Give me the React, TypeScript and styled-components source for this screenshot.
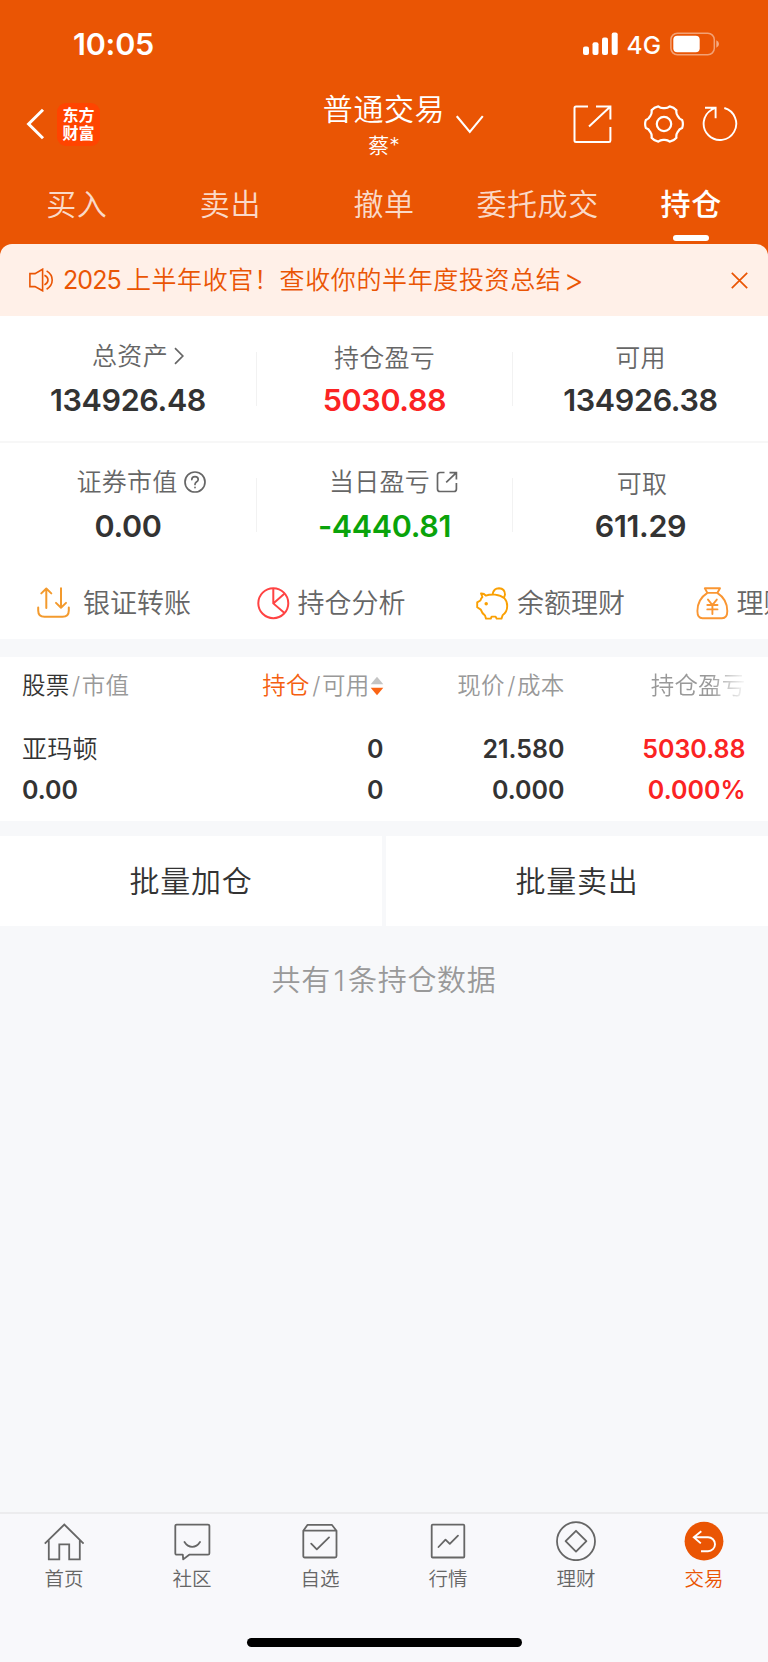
import React from 'react';
import styled, { createGlobalStyle } from 'styled-components';

const ORANGE = '#ea5504';
const INK = '#333333';
const GREY = '#666666';
const MUTED = '#999999';
const PAGE = '#f7f8fa';
const RED = '#fb2323';
const GREEN = '#0aa30a';

const GlobalStyle = createGlobalStyle`
  *, *::before, *::after { box-sizing: border-box; }
  body {
    margin: 0;
    background: ${PAGE};
    color: ${INK};
    font-family: Inter, 'Noto Sans CJK SC', sans-serif;
    font-weight: 350;
    -webkit-font-smoothing: antialiased;
  }
  svg { display: block; flex: none; }
`;

const Screen = styled.div`
  width: 768px;
  height: 1662px;
  display: flex;
  flex-direction: column;
  background: ${PAGE};
  overflow: hidden;
  white-space: nowrap;
`;

/* ---------- header ---------- */

const Header = styled.header`
  background: ${ORANGE};
  color: #fff;
  height: 256px;
  flex: none;
`;

const StatusBar = styled.div`
  height: 88px;
  padding: 0 49px 0 73px;
  display: flex;
  align-items: center;
  justify-content: space-between;
`;

const Clock = styled.span`
  font-size: 30.5px;
  line-height: 40px;
  font-weight: 600;
  letter-spacing: -0.2px;
`;

const StatusIcons = styled.div`
  display: flex;
  align-items: center;
`;

const Network = styled.span`
  margin: 1px 9px 0 8px;
  font-size: 24.5px;
  line-height: 30px;
  font-weight: 450;
  letter-spacing: 0;
`;

const NavBar = styled.div`
  height: 80px;
  display: grid;
  grid-template-columns: 1fr auto 1fr;
`;

const NavLeft = styled.div`
  display: flex;
  align-items: center;
  padding: 0 0 8px 26px;
  gap: 12px;
`;

const Logo = styled.div`
  width: 43px;
  height: 43px;
  border-radius: 9px;
  background: #ff4400;
  font-size: 16px;
  line-height: 18px;
  font-weight: 700;
  text-align: center;
  padding-top: 3px;
`;

const NavTitle = styled.div`
  display: flex;
  flex-direction: column;
  align-items: center;
`;

const TitleText = styled.span`
  font-size: 30px;
  line-height: 42px;
  letter-spacing: 0.6px;
`;

const SubTitle = styled.span`
  font-size: 21px;
  line-height: 32px;
`;

const NavRight = styled.div`
  display: flex;
  align-items: center;
  padding: 0 30px 8px 11px;
`;

const NavTools = styled.div`
  margin-left: auto;
  display: flex;
  align-items: center;
`;

const NavTool = styled.div<{ $gap?: number }>`
  margin-left: ${p => p.$gap ?? 0}px;
`;

const Tabs = styled.nav`
  height: 74px;
  display: grid;
  grid-template-columns: repeat(5, 1fr);
`;

const Tab = styled.div<{ $active?: boolean }>`
  display: flex;
  flex-direction: column;
  align-items: center;
  font-size: 30px;
  line-height: 40px;
  padding-top: 16px;
  letter-spacing: 0.6px;
  color: ${p => (p.$active ? '#fff' : 'rgba(255,255,255,0.8)')};
  font-weight: ${p => (p.$active ? 500 : 350)};

  &::after {
    content: '';
    display: ${p => (p.$active ? 'block' : 'none')};
    width: 36px;
    height: 6px;
    margin-top: 11px;
    border-radius: 3px;
    background: #fff;
  }
`;

/* ---------- notice ---------- */

const Notice = styled.div`
  position: relative;
  margin-top: -12px;
  height: 72px;
  flex: none;
  padding: 0 20px 0 28px;
  border-radius: 12px 12px 0 0;
  background: #fff0e8;
  color: ${ORANGE};
  display: flex;
  align-items: center;
  font-size: 25px;
  line-height: 36px;
  letter-spacing: 0.62px;
`;

const NoticeText = styled.span`
  flex: 1;
  display: flex;
  margin-left: 8px;
`;

const Year = styled.span`
  margin-right: 5px;
  font-weight: 400;
  letter-spacing: -0.9px;
`;

const More = styled.span`
  margin-left: 2px;
  font-size: 31px;
`;

/* ---------- account figures ---------- */

const Figures = styled.section`
  background: #fff;
  height: 253px;
  flex: none;
  display: grid;
  grid-template-rows: 125px 125px;
`;

const FigureRow = styled.div`
  display: grid;
  grid-template-columns: repeat(3, 256px);
  align-items: center;

  & + & { border-top: 2px solid #f7f7f7; }
`;

const Figure = styled.div`
  height: 54px;
  display: flex;
  flex-direction: column;
  align-items: center;
  justify-content: center;

  & + & { border-left: 1px solid #f2f2f2; }
`;

const FigureLabel = styled.div<{ $shift?: number; $lift?: number }>`
  display: flex;
  flex: none;
  align-items: center;
  gap: 6px;
  height: 42px;
  padding-left: ${p => p.$shift ?? 0}px;
  padding-bottom: ${p => p.$lift ?? 0}px;
  font-size: 25px;
  line-height: 34px;
  letter-spacing: 0.3px;
  color: ${GREY};
`;

const FigureValue = styled.div<{ $color?: string }>`
  flex: none;
  font-size: 30.5px;
  line-height: 41px;
  font-weight: 600;
  letter-spacing: -0.35px;
  color: ${p => p.$color ?? INK};
`;

/* ---------- shortcuts ---------- */

const Shortcuts = styled.div`
  height: 70px;
  flex: none;
  background: #fff;
  padding-left: 37px;
  display: flex;
  overflow: hidden;
`;

const Shortcut = styled.div<{ $gap?: number }>`
  flex: 0 0 219.5px;
  display: flex;
  align-items: flex-start;
  gap: ${p => p.$gap ?? 8}px;
  padding-top: 18px;
  font-size: 27px;
  line-height: 34px;
  color: ${GREY};
`;

/* ---------- holdings table ---------- */

const Holdings = styled.section`
  margin-top: 18px;
  height: 164px;
  flex: none;
  padding: 0 23px 0 22px;
  background: #fff;
`;

const GridRow = styled.div`
  display: grid;
  grid-template-columns: 171px 190.5px 181px 181px;
`;

const HeadRow = styled(GridRow)`
  height: 72px;
  padding-top: 11px;
  font-size: 23.5px;
  line-height: 36px;
  letter-spacing: 0.2px;
  color: ${MUTED};
`;

const HeadCell = styled.div<{ $left?: boolean; $fade?: boolean }>`
  display: flex;
  align-items: center;
  height: 36px;
  justify-content: ${p => (p.$left ? 'flex-start' : 'flex-end')};
  ${p => p.$fade && 'mask-image: linear-gradient(to right, #000 80%, transparent 101%);'}
`;

const Slash = styled.span`
  margin: 0 1.5px 0 2.5px;
`;

const Strong = styled.span<{ $color?: string }>`
  color: ${p => p.$color ?? INK};
`;

const Cell = styled.div<{ $left?: boolean; $color?: string }>`
  text-align: ${p => (p.$left ? 'left' : 'right')};
  color: ${p => p.$color ?? INK};
  font-size: 25px;
  line-height: 40.5px;
  font-weight: 600;
`;

const StockName = styled(Cell)`
  font-weight: 350;
  letter-spacing: 0.3px;
`;

/* ---------- batch actions ---------- */

const Batch = styled.div`
  margin-top: 15px;
  height: 90px;
  flex: none;
  display: grid;
  grid-template-columns: 1fr 1fr;
  gap: 4px;
`;

const BatchButton = styled.button`
  border: 0;
  padding: 0;
  background: #fff;
  color: ${INK};
  font: inherit;
  font-size: 30px;
  line-height: 40px;
  letter-spacing: 0.8px;
`;

const Summary = styled.p`
  margin: 35px 0 0;
  text-align: center;
  font-size: 29px;
  line-height: 40px;
  letter-spacing: 0.7px;
  color: ${MUTED};
`;

const Count = styled.span`
  margin: 0 2.5px;
`;

/* ---------- bottom bar ---------- */

const BottomBar = styled.footer`
  margin-top: auto;
  height: 150px;
  flex: none;
  background: #f8f8fb;
  border-top: 2px solid #ececee;
  display: flex;
  flex-direction: column;
  align-items: center;
`;

const BottomTabs = styled.nav`
  width: 768px;
  display: grid;
  grid-template-columns: repeat(6, 128px);
`;

const BottomTab = styled.div<{ $active?: boolean }>`
  display: flex;
  flex-direction: column;
  align-items: center;
  padding-top: 7px;
  gap: 5px;
  font-size: 19.5px;
  line-height: 26px;
  color: ${p => (p.$active ? ORANGE : GREY)};
`;

const HomeIndicator = styled.div`
  width: 275px;
  height: 9px;
  margin: auto 0 15px;
  border-radius: 5px;
  background: #000;
`;

/* ---------- icons ---------- */

type IconProps = {
  w: number;
  h: number;
  color?: string;
  sw?: number;
  round?: boolean;
  children: React.ReactNode;
};

const Icon = ({ w, h, color = 'currentColor', sw = 2, round, children }: IconProps) => (
  <svg
    width={w}
    height={h}
    viewBox={`0 0 ${w} ${h}`}
    fill="none"
    stroke={color}
    strokeWidth={sw}
    strokeLinecap={round ? 'round' : 'butt'}
    strokeLinejoin={round ? 'round' : 'miter'}
  >
    {children}
  </svg>
);

/* Six-toothed gear: a shallow cap on every tooth, a deeper curve between them. */
const gearPath = (() => {
  const at = (deg: number, r: number) => {
    const t = (deg * Math.PI) / 180;
    return `${(20 + r * Math.cos(t)).toFixed(2)} ${(20 + r * Math.sin(t)).toFixed(2)}`;
  };
  let d = `M${at(-12, 18.6)}`;
  for (let a = 0; a < 360; a += 60) {
    d += `Q${at(a, 19.6)} ${at(a + 12, 18.6)}Q${at(a + 18, 15.9)} ${at(a + 30, 15.9)}Q${at(a + 42, 15.9)} ${at(a + 48, 18.6)}`;
  }
  return `${d}Z`;
})();

const Signal = () => (
  <svg width="36" height="24" viewBox="0 0 36 24" fill="#fff">
    <rect x="0" y="14.5" width="6" height="8.5" rx="2" />
    <rect x="9.5" y="10.3" width="6" height="12.7" rx="2" />
    <rect x="19" y="5.5" width="6" height="17.5" rx="2" />
    <rect x="28.7" y="0.5" width="6" height="22.5" rx="2" />
  </svg>
);

const Battery = () => (
  <svg width="49" height="24" viewBox="0 0 49 24">
    <rect x="0.9" y="1.2" width="43.4" height="21.6" rx="6.5" fill="none" stroke="#fff" strokeOpacity="0.45" strokeWidth="1.5" />
    <rect x="3.3" y="3.7" width="26.4" height="16.6" rx="4" fill="#fff" />
    <path d="M46.3 8.2 Q49 9.5 49 12 Q49 14.5 46.3 15.8Z" fill="#fff" fillOpacity="0.5" />
  </svg>
);

const SortArrows = () => (
  <svg width="14" height="20" viewBox="0 0 14 20">
    <path d="M7 0.8 L13.3 8.3 H0.7Z" fill="#c4c4c4" />
    <path d="M7 19.3 L13.3 11.8 H0.7Z" fill="#fa6414" />
  </svg>
);

const bottomTabs: { label: string; icon: React.ReactNode; active?: boolean }[] = [
  {
    label: '首页',
    icon: (
      <Icon w={40} h={40} sw={1.8}>
        <path d="M0.8 22.6 L20.3 3.5 L39.6 22.6 M4.8 19.5 V38.3 H15.3 V23.4 H25.2 V38.3 H35.8 V19.5" />
      </Icon>
    ),
  },
  {
    label: '社区',
    icon: (
      <Icon w={40} h={40} sw={1.8} round>
        <path d="M4.5 3.6 H36 Q37.4 3.6 37.4 5 V32.3 Q37.4 33.7 36 33.7 H17.2 L11.2 38.4 L10.8 33.7 H4.8 Q3.3 33.7 3.3 32.3 V5 Q3.3 3.6 4.8 3.6Z M12.5 21 Q15.5 25.8 20.2 25.8 Q25 25.8 28 21" />
      </Icon>
    ),
  },
  {
    label: '自选',
    icon: (
      <Icon w={40} h={40} sw={1.8} round>
        <path d="M3.3 9.7 L7.6 3.8 H31.8 L36.5 9.7 V35 Q36.5 36.5 35 36.5 H4.8 Q3.3 36.5 3.3 35Z M3.3 9.7 H36.5 M11.2 22.6 L16.8 28.4 L29 16.4" />
      </Icon>
    ),
  },
  {
    label: '行情',
    icon: (
      <Icon w={40} h={40} sw={1.8} round>
        <rect x="3.7" y="3.7" width="32.6" height="32.8" rx="1" />
        <path d="M10.5 26 L17.5 18.6 L21.8 22.9 L30 14.6" />
      </Icon>
    ),
  },
  {
    label: '理财',
    icon: (
      <Icon w={40} h={40} sw={1.8} round>
        <circle cx="20" cy="20.2" r="19" />
        <path d="M20 9.8 L30.4 20.2 L20 30.6 L9.6 20.2Z" />
      </Icon>
    ),
  },
  {
    label: '交易',
    active: true,
    icon: (
      <Icon w={40} h={40} sw={1.9} color="#fff">
        <circle cx="20" cy="20.2" r="19.4" fill={ORANGE} stroke="none" />
        <path d="M17.3 10.2 L9.8 16.2 L16.8 22.4 M9.8 16.2 H24 A7 7 0 0 1 24 30.2 H17" />
      </Icon>
    ),
  },
];

export default function App() {
  return (
    <>
      <GlobalStyle />
      <Screen>
        <Header>
          <StatusBar>
            <Clock>10:05</Clock>
            <StatusIcons>
              <Signal />
              <Network>4G</Network>
              <Battery />
            </StatusIcons>
          </StatusBar>
          <NavBar>
            <NavLeft>
              <Icon w={19} h={32} sw={3}>
                <path d="M17 1.8 L2.6 16 L17 30.2" />
              </Icon>
              <Logo>东方<br />财富</Logo>
            </NavLeft>
            <NavTitle>
              <TitleText>普通交易</TitleText>
              <SubTitle>蔡*</SubTitle>
            </NavTitle>
            <NavRight>
              <Icon w={28} h={24} sw={2.1}>
                <path d="M0.8 4.2 L13.8 19.8 L26.8 4.2" />
              </Icon>
              <NavTools>
                <NavTool>
                  <Icon w={39} h={39} sw={2}>
                    <path d="M15 1.5 H3 Q1.5 1.5 1.5 3 V35.5 Q1.5 37 3 37 H36 Q37.4 37 37.4 35.5 V22 M23 1.5 H37.4 V14.5 M37.4 1.5 L16 21.5" />
                  </Icon>
                </NavTool>
                <NavTool $gap={32}>
                  <Icon w={40} h={40} sw={2.2} round>
                    <path d={gearPath} />
                    <circle cx="20" cy="20" r="7.2" />
                  </Icon>
                </NavTool>
                <NavTool $gap={18}>
                  <Icon w={36} h={38} sw={1.9}>
                    <path d="M13.6 13.3 V2.7 H3 M13.6 2.7 L9.6 4.7 A16.3 16.3 0 1 0 22.3 3" />
                  </Icon>
                </NavTool>
              </NavTools>
            </NavRight>
          </NavBar>
          <Tabs>
            <Tab>买入</Tab>
            <Tab>卖出</Tab>
            <Tab>撤单</Tab>
            <Tab>委托成交</Tab>
            <Tab $active>持仓</Tab>
          </Tabs>
        </Header>

        <Notice>
          <Icon w={27} h={24} sw={1.6}>
            <path d="M1.9 5.6 H7 L14.6 1.2 V22.8 L7 18.6 H1.9Z M16.4 7.3 Q20 9 20 12 Q20 15 16.4 16.9 M18.6 2.9 Q24.2 6.3 24.2 12 Q24.2 17.7 18.6 21.2" />
          </Icon>
          <NoticeText>
            <Year>2025</Year>上半年收官！查收你的半年度投资总结<More>&gt;</More>
          </NoticeText>
          <Icon w={17} h={17} sw={1.7}>
            <path d="M0.8 0.8 L16.2 16.2 M16.2 0.8 L0.8 16.2" />
          </Icon>
        </Notice>

        <Figures>
          <FigureRow>
            <Figure>
              <FigureLabel $shift={20} $lift={4}>
                总资产
                <Icon w={10} h={18} sw={1.7}>
                  <path d="M1 1.2 L8.8 9 L1 16.8" />
                </Icon>
              </FigureLabel>
              <FigureValue>134926.48</FigureValue>
            </Figure>
            <Figure>
              <FigureLabel>持仓盈亏</FigureLabel>
              <FigureValue $color={RED}>5030.88</FigureValue>
            </Figure>
            <Figure>
              <FigureLabel>可用</FigureLabel>
              <FigureValue>134926.38</FigureValue>
            </Figure>
          </FigureRow>
          <FigureRow>
            <Figure>
              <FigureLabel $shift={26} $lift={4}>
                证券市值
                <Icon w={22} h={22} sw={1.7} round>
                  <circle cx="11" cy="11" r="10" />
                  <path d="M7.8 8.6 Q7.8 5.6 11 5.6 Q14.2 5.6 14.2 8.4 Q14.2 9.8 12.4 11 Q11 12 11 13.4 M11 16.4 V16.6" />
                </Icon>
              </FigureLabel>
              <FigureValue>0.00</FigureValue>
            </Figure>
            <Figure>
              <FigureLabel $shift={18} $lift={4}>
                当日盈亏
                <Icon w={22} h={22} sw={1.7}>
                  <path d="M8.5 1.5 H4 Q1.5 1.5 1.5 4 V18 Q1.5 20.5 4 20.5 H18 Q20.4 20.5 20.4 18 V12 M13.5 1.6 H20.4 V8.5 M20.4 1.6 L10.2 11.4" />
                </Icon>
              </FigureLabel>
              <FigureValue $color={GREEN}>-4440.81</FigureValue>
            </Figure>
            <Figure>
              <FigureLabel $shift={3}>可取</FigureLabel>
              <FigureValue>611.29</FigureValue>
            </Figure>
          </FigureRow>
        </Figures>

        <Shortcuts>
          <Shortcut $gap={13}>
            <Icon w={33} h={32} sw={2} round color="#f39a2d">
              <path d="M1.2 20.5 V23.5 Q1.2 29.8 7.5 29.8 H25.5 Q31.8 29.8 31.8 23.5 V20.5 M9.3 21 V1.6 M4.3 6.4 L9.3 1.5 L14.3 6.4 M24 1.2 V20.8 M19 15.9 L24 20.8 L29 15.9" />
            </Icon>
            银证转账
          </Shortcut>
          <Shortcut>
            <Icon w={33} h={33} sw={2} color="#ff4343">
              <circle cx="16.3" cy="16.2" r="15" />
              <path d="M16.3 1.2 V16.4 L27.2 25.8 M16.3 16.4 L27.6 6.4" />
            </Icon>
            持仓分析
          </Shortcut>
          <Shortcut>
            <Icon w={33} h={33} sw={1.9} round color="#faa003">
              <path d="M5 6.5 Q8 6.3 9.8 8.6 Q13 7.4 19 7.6 Q31.2 9 31.2 19 Q31.2 25 26.6 28.3 L25.5 31.6 H20.6 L19.6 29.6 H15.6 L14.8 31.6 H10 L9 28.5 Q6 26.4 4.8 22.6 L1.2 20.2 V15.4 L4.4 13.5 Q5 11.3 6.4 10Z M16.6 7.2 Q17.6 1.2 23 1.2 Q29 1.5 29 7.5 L28 10.8" />
              <circle cx="10.2" cy="16.8" r="0.8" fill="#faa003" />
            </Icon>
            余额理财
          </Shortcut>
          <Shortcut>
            <Icon w={33} h={33} sw={1.9} round color="#fa9632">
              <path d="M8.8 1.3 H24 L21.3 5.9 H11.4Z M11.4 5.9 C5 10 1.4 16.5 1.4 24 C1.4 28.8 3 31.2 6.5 31.2 H26 C29.8 31.2 31.3 28.8 31.3 24 C31.3 16.5 27.6 10 21.3 5.9 M12 12.6 L16.4 18 L20.8 12.6 M16.4 18 V27 M11.3 18 H21.5 M11.3 22.4 H21.5" />
            </Icon>
            理财
          </Shortcut>
        </Shortcuts>

        <Holdings>
          <HeadRow>
            <HeadCell $left>
              <Strong>股票</Strong><Slash>/</Slash>市值
            </HeadCell>
            <HeadCell>
              <Strong $color="#f55f10">持仓</Strong><Slash>/</Slash>可用
              <SortArrows />
            </HeadCell>
            <HeadCell>现价<Slash>/</Slash>成本</HeadCell>
            <HeadCell $fade>持仓盈亏</HeadCell>
          </HeadRow>
          <GridRow>
            <StockName $left>亚玛顿</StockName>
            <Cell>0</Cell>
            <Cell>21.580</Cell>
            <Cell $color={RED}>5030.88</Cell>
            <Cell $left>0.00</Cell>
            <Cell>0</Cell>
            <Cell>0.000</Cell>
            <Cell $color={RED}>0.000%</Cell>
          </GridRow>
        </Holdings>

        <Batch>
          <BatchButton>批量加仓</BatchButton>
          <BatchButton>批量卖出</BatchButton>
        </Batch>

        <Summary>共有<Count>1</Count>条持仓数据</Summary>

        <BottomBar>
          <BottomTabs>
            {bottomTabs.map(t => (
              <BottomTab key={t.label} $active={t.active}>
                {t.icon}
                {t.label}
              </BottomTab>
            ))}
          </BottomTabs>
          <HomeIndicator />
        </BottomBar>
      </Screen>
    </>
  );
}
